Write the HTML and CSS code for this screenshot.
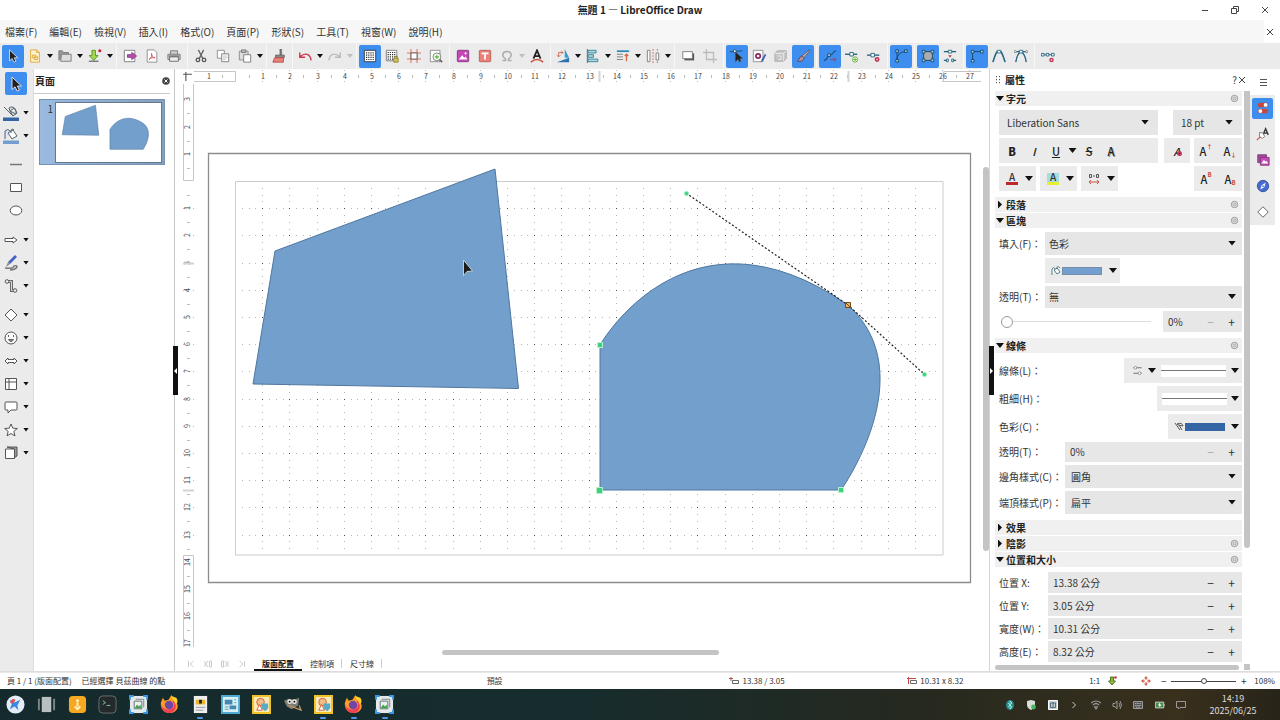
FILE: index.html
```html
<!DOCTYPE html>
<html lang="zh-Hant">
<head>
<meta charset="utf-8">
<title>無題 1 — LibreOffice Draw</title>
<link rel="stylesheet" href="styles.css">
</head>
<body>
<svg class="sprite" aria-hidden="true">
  <symbol id="cursor" viewBox="0 0 16 16"><path d="M4 1v12.500l3-2.700L9.200 15l2.200-1-2-4h4z" fill="#222" stroke="#fff" stroke-width=".8"/></symbol>
  <symbol id="new" viewBox="0 0 16 16"><path d="M3 1h7l3 3v11H3z" fill="#fdf1cf" stroke="#dca52e"/><path d="M10 1v3h3" fill="none" stroke="#dca52e"/><path d="M5 7h4v3H5zM7 9h4v3H7z" fill="none" stroke="#dca52e"/></symbol>
  <symbol id="open" viewBox="0 0 16 16"><path d="M1 13V2h4l1 2h6v3" fill="#999" stroke="#777"/><path d="M4 6h11v8H3z" fill="#ddd" stroke="#777"/></symbol>
  <symbol id="save" viewBox="0 0 16 16"><path d="M1 14h11" stroke="#777" stroke-width="1.6"/><path d="M4.500 1.500h4v6h3l-5 5.500-5-5.500h3z" fill="#a4d84e" stroke="#4d8f24"/><circle cx="13.500" cy="2" r="1.800" fill="#c0263a"/></symbol>
  <symbol id="export" viewBox="0 0 16 16"><path d="M1.500 1.500h12v13h-12z" fill="#fff" stroke="#777"/><path d="M5 6.500h5V4l5.500 4L10 12V9.500H5z" fill="#c04bb0" stroke="#7c397c"/></symbol>
  <symbol id="pdf" viewBox="0 0 16 16"><path d="M2.500 1h8l3 3v11h-11z" fill="#fff" stroke="#888"/><path d="M4.500 12c3-2 4-5 3-7-1 1 2 5.500 4 5-2-.5-5 0-7 2z" fill="none" stroke="#cf4a5c"/></symbol>
  <symbol id="print" viewBox="0 0 16 16"><path d="M4 6V2h8v4M1 6h14v6H1z" fill="#ccc" stroke="#777"/><path d="M3 9h10v5H3z" fill="#eee" stroke="#666"/><path d="M2 8h12" stroke="#555"/></symbol>
  <symbol id="cut" viewBox="0 0 16 16"><path d="M5 1l5 10M11 1L6 11" stroke="#666" stroke-width="1.500"/><circle cx="4.500" cy="12.500" r="2" fill="none" stroke="#555" stroke-width="1.500"/><circle cx="11.500" cy="12.500" r="2" fill="none" stroke="#555" stroke-width="1.500"/></symbol>
  <symbol id="copy" viewBox="0 0 16 16"><path d="M1.500 1.500h8v9h-8z" fill="#fff" stroke="#888"/><path d="M6.500 5.500h8v9h-8z" fill="#fff" stroke="#777"/><path d="M8 8h5M8 10h5M8 12h3" stroke="#bbb"/></symbol>
  <symbol id="paste" viewBox="0 0 16 16"><path d="M1.500 2.500h10v10h-10z" fill="#ddd" stroke="#888"/><path d="M4 1h5v3H4z" fill="#bbb" stroke="#777"/><path d="M6.500 6.500h8v8.500h-8z" fill="#fff" stroke="#777"/></symbol>
  <symbol id="brush" viewBox="0 0 16 16"><path d="M9 0h2v7H9z" fill="#777" stroke="#555" stroke-width=".5"/><path d="M4 7h10v3H4z" fill="#888" stroke="#666"/><path d="M3 10h10v5H1z" fill="#e7827b" stroke="#b24a47"/></symbol>
  <symbol id="undo" viewBox="0 0 16 16"><path d="M15 13C14 5 8 4 2.500 8.500M2 4v5.500h6" fill="none" stroke="#cf3450" stroke-width="1.600"/></symbol>
  <symbol id="redo" viewBox="0 0 16 16"><path d="M1 13C2 5 8 4 13.500 8.500M14 4v5.500H8" fill="none" stroke="#bbb" stroke-width="1.600"/></symbol>
  <symbol id="grid" viewBox="0 0 16 16"><path d="M1.500 1.500h13v13h-13z" fill="#fff" stroke="#333"/><path d="M3.500 4.500h10M3.500 7h10M3.500 9.500h10M3.500 12h10" stroke="#222" stroke-width="1.300" stroke-dasharray="1.300 1.200"/></symbol>
  <symbol id="gridsnap" viewBox="0 0 16 16"><path d="M1.500 1.500h12v12h-12z" fill="#fff" stroke="#777"/><path d="M3 4h9M3 6.500h9M3 9h9M3 11.500h7" stroke="#222" stroke-width="1.300" stroke-dasharray="1.300 1.200"/><path d="M10 10.500h5v4.500h-5zM11 10V8.500h3V10" fill="#d8c65a" stroke="#8a7d28"/></symbol>
  <symbol id="guides" viewBox="0 0 16 16"><path d="M4.500 0v16M11.500 0v16M0 4.500h16M0 11.500h16" stroke="#d9765f" stroke-width="1.200"/><path d="M4.500 4.500h7v7h-7z" fill="#fff" stroke="#555"/></symbol>
  <symbol id="zoom" viewBox="0 0 16 16"><path d="M1.500 1.500h11v13h-11z" fill="#fff" stroke="#888"/><circle cx="9" cy="9" r="4.500" fill="#f5fff0" stroke="#777"/><path d="M12 12l3 3" stroke="#666" stroke-width="2"/><path d="M6.500 9h5M9 6.500v5" stroke="#5caf3d" stroke-width="1.200"/></symbol>
  <symbol id="image" viewBox="0 0 16 16"><rect x="1.500" y="1.500" width="13" height="13" rx="1" fill="#c448b4" stroke="#7f397e"/><path d="M3 12l4-5 2.500 3L11 8.500l2 3.500z" fill="#fff"/><circle cx="11" cy="5" r="1.200" fill="#fff"/></symbol>
  <symbol id="textbox" viewBox="0 0 16 16"><rect x="1.500" y="1.500" width="13" height="13" rx="1" fill="#ea8077" stroke="#b65e57"/><path d="M4 5h8M8 5v7" stroke="#fff" stroke-width="2"/></symbol>
  <symbol id="omega" viewBox="0 0 16 16"><path d="M2 14h4v-2C0 8 2 2 8 2s8 6 2 10v2h4" fill="none" stroke="#aaa" stroke-width="2"/></symbol>
  <symbol id="fontwork" viewBox="0 0 16 16"><path d="M4 11L8 1.500 12 11M5.500 8h5" fill="none" stroke="#222" stroke-width="2"/><path d="M1 15q7-6 14 0" fill="none" stroke="#cc513d" stroke-width="1.800"/></symbol>
  <symbol id="rotate" viewBox="0 0 16 16"><path d="M10 0l5 10h-5z" fill="#3a9ccd"/><path d="M1 15l14-5v5z" fill="#2d72ad"/><path d="M3 9V4h5M6 2l2 2-2 2M1 7l2 2 2-2" fill="none" stroke="#d1674c"/></symbol>
  <symbol id="align" viewBox="0 0 16 16"><path d="M1.500 0v16" stroke="#555"/><path d="M2.500 1.500h9v3h-9zM2.500 6.500h6v3h-6zM2.500 11.500h11v3h-11z" fill="#addae2" stroke="#317c91"/></symbol>
  <symbol id="arrange" viewBox="0 0 16 16"><path d="M1 2.500h14" stroke="#2f86bd" stroke-width="2"/><path d="M1 6h7M1 9h7M1 12h7" stroke="#777"/><path d="M12 14V6M10 8l2-2 2 2" fill="none" stroke="#d76746" stroke-width="1.500"/></symbol>
  <symbol id="distribute" viewBox="0 0 16 16"><path d="M1.500 1.500h3v13h-3zM11.500 4.500h3v8h-3z" fill="#fff" stroke="#777"/><path d="M8 0v16M13 0v3M13 14v2" stroke="#d15d51" stroke-dasharray="2 1.500"/></symbol>
  <symbol id="shadow" viewBox="0 0 16 16"><path d="M4 5h11v8H4z" fill="#555"/><path d="M2 3h11v8H2z" fill="#fff" stroke="#777"/></symbol>
  <symbol id="crop" viewBox="0 0 16 16"><path d="M4 0v12h12M0 4h12v12" fill="none" stroke="#bbb" stroke-width="1.500"/></symbol>
  <symbol id="points" viewBox="0 0 16 16"><path d="M0 3h5l9-1" fill="none" stroke="#17496d"/><path d="M4 1h3v3H4z" fill="#fff" stroke="#25557a"/><path d="M6 3v12l3-3 2 3 1.500-1-1-3H15z" fill="#222" stroke="#777" stroke-width=".5"/></symbol>
  <symbol id="glue" viewBox="0 0 16 16"><path d="M1.500 1.500h11v13h-11z" fill="#fff" stroke="#888"/><circle cx="7" cy="8" r="2.500" fill="#fff" stroke="#8c2761" stroke-width="2"/><path d="M15 5l-4 7-1 3 3-2 3-6z" fill="#3763b8"/></symbol>
  <symbol id="extrude" viewBox="0 0 16 16"><path d="M1 5l3-3h10v9l-3 3H1z" fill="#c4c4c4" stroke="#aaa"/><path d="M1 5h10v9M11 5l3-3M4 8h4v4H5" fill="none" stroke="#eee"/></symbol>
  <symbol id="paint" viewBox="0 0 16 16"><path d="M15 1L7 8l2 2 6-7z" fill="#c5b9be" stroke="#654f5c"/><path d="M7 8c-3 0-3 4-5 6 4 1 7-1 7-4z" fill="#b9928f" stroke="#59455f"/></symbol>
  <symbol id="curve" viewBox="0 0 16 16"><path d="M1 13C6 13 4 7 8 7s3-5 7-5" fill="none" stroke="#174f7a" stroke-width="1.200"/><path d="M5.500 5.500h3v3h-3z" fill="#b8e0f1" stroke="#14456d"/><path d="M8 12h7M12 10l3 2-3 2" fill="none" stroke="#8a4a7b"/></symbol>
  <symbol id="pointadd" viewBox="0 0 16 16"><path d="M0 6h14" stroke="#21607b" stroke-width="1.500"/><path d="M5.500 4h4v4h-4z" fill="#fff" stroke="#21607b"/><circle cx="11.500" cy="12" r="3" fill="#fff" stroke="#58ae31"/><path d="M9.500 12h4M11.500 10v4" stroke="#58ae31"/></symbol>
  <symbol id="pointdel" viewBox="0 0 16 16"><path d="M0 7h14" stroke="#21607b" stroke-width="1.500"/><path d="M4.500 5h4v4h-4z" fill="#fff" stroke="#21607b"/><circle cx="11.500" cy="12" r="2.800" fill="#c73659"/><circle cx="11.500" cy="12" r=".9" fill="#fff"/></symbol>
  <symbol id="tocurve" viewBox="0 0 16 16"><path d="M3.500 14V3M3 13Q4 3 14 3" fill="none" stroke="#123f61"/><path d="M2 1h3v3H2zM2 12h3v3H2zM12 1h3v3h-3z" fill="#b0c6d4" stroke="#12486e"/></symbol>
  <symbol id="bezclose" viewBox="0 0 16 16"><path d="M3 3h10v10H3z" fill="#aaa" stroke="#174465"/><path d="M1.500 1.500h3v3h-3zM11.500 1.500h3v3h-3zM1.500 11.500h3v3h-3zM11.500 11.500h3v3h-3z" fill="#c3dbe6" stroke="#174465"/></symbol>
  <symbol id="split" viewBox="0 0 16 16"><path d="M1 3h14M1 13h5M10 13h5" stroke="#21607b" stroke-width="1.500"/><path d="M6 1.500h4v3H6zM4 11.500h2v3H4zM10 11.500h2v3h-2z" fill="#fff" stroke="#21607b"/><path d="M6 7h4L8 10z" fill="#c33b43"/></symbol>
  <symbol id="corner" viewBox="0 0 16 16"><path d="M3 14V3h11" fill="none" stroke="#123f61"/><path d="M1.500 1.500h3v3h-3zM12 1.500h3v3h-3zM1.500 12h3v3h-3z" fill="#b0dbea" stroke="#124766"/></symbol>
  <symbol id="smooth" viewBox="0 0 16 16"><path d="M1 15C3 9 4 5 6 3h4c2 2 3 6 5 12" fill="none" stroke="#276783" stroke-width="1.800"/><path d="M6 1.500h4v3H6z" fill="#fff" stroke="#276783"/></symbol>
  <symbol id="symmetric" viewBox="0 0 16 16"><path d="M1 3h14M2 15C3 9 4 5 8 3c4 2 5 6 6 12" fill="none" stroke="#276783" stroke-width="1.600"/><path d="M6 1.500h4v3H6z" fill="#fff" stroke="#276783"/><circle cx="1.500" cy="3" r="1.200" fill="#fff" stroke="#777"/><circle cx="14.500" cy="3" r="1.200" fill="#fff" stroke="#777"/></symbol>
  <symbol id="reduce" viewBox="0 0 16 16"><path d="M1 6.500h14" stroke="#21607b"/><path d="M.500 5h3v3h-3zM6 5h3v3H6zM12 5h3v3h-3z" fill="#fff" stroke="#21607b"/><circle cx="12" cy="12.500" r="2.600" fill="#c73659"/><circle cx="12" cy="12.500" r=".9" fill="#fff"/></symbol>
  <symbol id="linecolor" viewBox="0 0 16 16"><path d="M1 2l9 9M6 3c4-3 8 1 7 6L7 6zM7 6l3 5 4-3-3-5z" fill="#ddd" stroke="#52656c"/><path d="M0 12.500h16v3.500H0z" fill="#3465a4"/></symbol>
  <symbol id="fillcolor" viewBox="0 0 16 16"><path d="M2 11V3q3-3 5 0" fill="#ddf" stroke="#52656c"/><path d="M5 5l5-3 4 6-5 3z" fill="#fff" stroke="#52656c"/><path d="M8 5V2q2-2 3 0" fill="none" stroke="#52656c"/><path d="M0 12.500h16v3.500H0z" fill="#729fcf"/></symbol>
  <symbol id="line" viewBox="0 0 16 16"><path d="M2 7.500h12" stroke="#777" stroke-width="1.500"/></symbol>
  <symbol id="rect" viewBox="0 0 16 16"><path d="M2.500 3.500h11v8h-11z" fill="#fff" stroke="#555"/></symbol>
  <symbol id="ellipse" viewBox="0 0 16 16"><ellipse cx="8" cy="7.500" rx="5.800" ry="4.500" fill="#fff" stroke="#555"/></symbol>
  <symbol id="arrow" viewBox="0 0 16 16"><path d="M2 6.500h8V5l4 3-4 3V9.500H2z" fill="#fff" stroke="#555"/></symbol>
  <symbol id="pen" viewBox="0 0 16 16"><path d="M12 0l2 2-7 7-2-2z" fill="#4762c4"/><path d="M5 7l-2 5 4-3z" fill="#888"/><path d="M2 13q9 1 9-2 3-1 3 1-2 3-7 3" fill="none" stroke="#777" stroke-width="1.400"/></symbol>
  <symbol id="connector" viewBox="0 0 16 16"><path d="M4.500 3.500h4v9h3" fill="none" stroke="#666" stroke-width="3"/><path d="M4.500 3.500h4v9h3" fill="none" stroke="#ddd"/><circle cx="4" cy="3.500" r="1.800" fill="#eee" stroke="#555"/><circle cx="12" cy="12.500" r="1.800" fill="#eee" stroke="#555"/></symbol>
  <symbol id="diamond" viewBox="0 0 16 16"><path d="M8 2l6 6-6 6-6-6z" fill="#fff" stroke="#555"/></symbol>
  <symbol id="smile" viewBox="0 0 16 16"><circle cx="8" cy="8" r="6" fill="#f8f8f8" stroke="#555"/><path d="M5.500 5v2M10.500 5v2M5.500 9.500h5q-1 2-2.500 2t-2.500-2" fill="#888" stroke="#666"/></symbol>
  <symbol id="dblarrow" viewBox="0 0 16 16"><path d="M2 8l3-3v1.500h6V5l3 3-3 3V9.500H5V11z" fill="#fff" stroke="#555"/></symbol>
  <symbol id="table" viewBox="0 0 16 16"><path d="M2.500 2.500h11v11h-11zM2.500 6h11M6 2.500v11" fill="#fff" stroke="#555"/></symbol>
  <symbol id="callout" viewBox="0 0 16 16"><path d="M3 3h10q1 0 1 1v6q0 1-1 1H8l-3 3v-3H3q-1 0-1-1V4q0-1 1-1z" fill="#fff" stroke="#555"/></symbol>
  <symbol id="star" viewBox="0 0 16 16"><path d="M8 2l1.800 4.200 4.500.3-3.500 2.900 1.200 4.500L8 11.500l-4 2.400 1.200-4.500-3.500-2.900 4.500-.3z" fill="#fff" stroke="#555"/></symbol>
  <symbol id="cube" viewBox="0 0 16 16"><path d="M4 2h10v9l-3 2V4z" fill="#999" stroke="#555"/><path d="M2.500 4h9v9.500h-9z" fill="#fff" stroke="#555"/></symbol>
  <symbol id="gear" viewBox="0 0 10 10"><circle cx="5" cy="5" r="3.600" fill="#ddd" stroke="#999"/><circle cx="5" cy="5" r="1.500" fill="none" stroke="#aaa"/></symbol>
  <symbol id="sliders" viewBox="0 0 16 16"><path d="M2 4h12M2 12h12" stroke="#777" stroke-width="1.500"/><circle cx="5" cy="4" r="2" fill="#fff" stroke="#777"/><circle cx="11" cy="12" r="2" fill="#fff" stroke="#777"/></symbol>
  <symbol id="document" viewBox="0 0 20 20"><path d="M1 1h18v18H1z" fill="#e3e8ea"/><path d="M1 5V1h4M15 1h4v4M19 15v4h-4M5 19H1v-4" fill="none" stroke="#3697e5" stroke-width="2"/><path d="M5.500 6.500h8v8h-8z" fill="#eef2ee" stroke="#667177"/><path d="M6 14l2.500-4 2 2 1.500-2 1 4z" fill="#45a350"/><path d="M7 4.500h8.500V13" fill="none" stroke="#7d868b"/></symbol>
  <symbol id="firefox" viewBox="0 0 20 20"><path d="M10 19C4 19 0 14 1 8l2-5 2 3 4-1 3-5 2 4 3 3c4 6 0 12-7 12z" fill="#ff9b26"/><path d="M1 9c1 5 5 7 9 6 5-1 6-5 3-9 5 1 6 13-4 13C4 19 1 14 1 9z" fill="#ef4057"/><circle cx="9.500" cy="10.500" r="4.500" fill="#7147a6"/><path d="M12 1c0 4 5 5 4 9 3-1 3-5 1-7z" fill="#ffd52b"/></symbol>
  <symbol id="draw" viewBox="0 0 20 20"><path d="M1 1h18v18H1z" fill="#f9eab8" stroke="#f2c229" stroke-width="2"/><circle cx="9" cy="7.500" r="4" fill="#f4bd88" stroke="#d16339"/><path d="M5 16l3-6 3 6z" fill="#fff" stroke="#d16339"/><path d="M10 9h7v5l-3 3-4-3z" fill="#57abc7"/></symbol>
</svg>

<header class="titlebar">
  <h1>無題 1 — LibreOffice Draw</h1>
  <div class="window-buttons">
    <button aria-label="最小化"><svg viewBox="0 0 10 10"><path d="M2 5.500h6"/></svg></button>
    <button aria-label="還原"><svg viewBox="0 0 10 10"><path d="M1.500 3.500h5v5h-5zM3.500 3.500v-2h5v5h-2"/></svg></button>
    <button aria-label="關閉"><svg viewBox="0 0 10 10"><path d="M2 2l6 6M8 2L2 8"/></svg></button>
  </div>
</header>
<nav class="menubar">
  <button>檔案(F)</button><button>編輯(E)</button><button>檢視(V)</button><button>插入(I)</button><button>格式(O)</button><button>頁面(P)</button><button>形狀(S)</button><button>工具(T)</button><button>視窗(W)</button><button>說明(H)</button>
  <button class="close-doc" aria-label="關閉文件"><svg viewBox="0 0 10 10"><path d="M2 2l6 6M8 2L2 8"/></svg></button>
</nav>
<div class="toolbar" role="toolbar" aria-label="標準">
  <button class="tool on" aria-label="選取"><svg><use href="#cursor"/></svg></button>
  <button class="tool" aria-label="新增"><svg><use href="#new"/></svg></button><button class="drop" aria-label="新增選項"></button>
  <button class="tool" aria-label="開啟"><svg><use href="#open"/></svg></button><button class="drop" aria-label="開啟選項"></button>
  <button class="tool" aria-label="儲存"><svg><use href="#save"/></svg></button><button class="drop" aria-label="儲存選項"></button>
  <i class="sep"></i>
  <button class="tool" aria-label="匯出"><svg><use href="#export"/></svg></button>
  <button class="tool" aria-label="PDF"><svg><use href="#pdf"/></svg></button>
  <button class="tool" aria-label="列印"><svg><use href="#print"/></svg></button>
  <i class="sep"></i>
  <button class="tool" aria-label="剪下"><svg><use href="#cut"/></svg></button>
  <button class="tool" aria-label="複製"><svg><use href="#copy"/></svg></button>
  <button class="tool" aria-label="貼上"><svg><use href="#paste"/></svg></button><button class="drop" aria-label="貼上選項"></button>
  <i class="sep tight"></i>
  <button class="tool" aria-label="仿製格式"><svg><use href="#brush"/></svg></button>
  <i class="sep tight"></i>
  <button class="tool" aria-label="復原"><svg><use href="#undo"/></svg></button><button class="drop" aria-label="復原選項"></button>
  <button class="tool" aria-label="取消復原"><svg><use href="#redo"/></svg></button><button class="drop off" aria-label="取消復原選項"></button>
  <i class="sep"></i>
  <button class="tool on" aria-label="網格"><svg><use href="#grid"/></svg></button>
  <button class="tool" aria-label="貼齊網格"><svg><use href="#gridsnap"/></svg></button>
  <button class="tool" aria-label="輔助線"><svg><use href="#guides"/></svg></button>
  <button class="tool" aria-label="縮放"><svg><use href="#zoom"/></svg></button>
  <i class="sep"></i>
  <button class="tool" aria-label="圖片"><svg><use href="#image"/></svg></button>
  <button class="tool" aria-label="文字方塊"><svg><use href="#textbox"/></svg></button>
  <button class="tool" aria-label="特殊字元"><svg class="small"><use href="#omega"/></svg></button><button class="drop off" aria-label="特殊字元選項"></button>
  <button class="tool" aria-label="文字藝術"><svg><use href="#fontwork"/></svg></button>
  <i class="sep tight"></i>
  <button class="tool" aria-label="轉換"><svg><use href="#rotate"/></svg></button><button class="drop" aria-label="轉換選項"></button>
  <button class="tool" aria-label="對齊"><svg><use href="#align"/></svg></button><button class="drop" aria-label="對齊選項"></button>
  <button class="tool" aria-label="排列"><svg><use href="#arrange"/></svg></button><button class="drop" aria-label="排列選項"></button>
  <button class="tool" aria-label="分布"><svg><use href="#distribute"/></svg></button><button class="drop" aria-label="分布選項"></button>
  <i class="sep"></i>
  <button class="tool" aria-label="陰影"><svg><use href="#shadow"/></svg></button>
  <button class="tool" aria-label="裁剪"><svg><use href="#crop"/></svg></button>
  <i class="sep"></i>
  <button class="tool on" aria-label="接點"><svg><use href="#points"/></svg></button>
  <button class="tool" aria-label="黏著點"><svg><use href="#glue"/></svg></button>
  <button class="tool" aria-label="立體"><svg><use href="#extrude"/></svg></button>
  <button class="tool on" aria-label="繪圖"><svg><use href="#paint"/></svg></button>
  <i class="sep"></i>
  <button class="tool on" aria-label="移動接點"><svg><use href="#curve"/></svg></button>
  <button class="tool" aria-label="插入接點"><svg><use href="#pointadd"/></svg></button>
  <button class="tool" aria-label="刪除接點"><svg><use href="#pointdel"/></svg></button>
  <i class="sep"></i>
  <button class="tool on" aria-label="轉為曲線"><svg><use href="#tocurve"/></svg></button>
  <i class="sep"></i>
  <button class="tool on" aria-label="閉合曲線"><svg><use href="#bezclose"/></svg></button>
  <button class="tool" aria-label="分割曲線"><svg><use href="#split"/></svg></button>
  <i class="sep"></i>
  <button class="tool on" aria-label="角點"><svg><use href="#corner"/></svg></button>
  <button class="tool" aria-label="平滑"><svg><use href="#smooth"/></svg></button>
  <button class="tool" aria-label="對稱"><svg><use href="#symmetric"/></svg></button>
  <i class="sep"></i>
  <button class="tool" aria-label="減少接點"><svg><use href="#reduce"/></svg></button>
</div>

<main class="workspace">
  <div class="toolbox" role="toolbar" aria-label="繪圖">
    <div class="tool-group single"><button class="tool on" aria-label="選取"><svg><use href="#cursor"/></svg></button></div>
    <div class="tool-group">
      <div><button class="tool" aria-label="線條色彩"><svg><use href="#linecolor"/></svg></button><button class="drop" aria-label="線條色彩選項"></button></div>
      <div><button class="tool" aria-label="填入色彩"><svg><use href="#fillcolor"/></svg></button><button class="drop" aria-label="填入色彩選項"></button></div>
    </div>
    <div class="tool-group single">
      <button class="tool" aria-label="直線"><svg><use href="#line"/></svg></button>
      <button class="tool" aria-label="矩形"><svg><use href="#rect"/></svg></button>
      <button class="tool" aria-label="橢圓"><svg><use href="#ellipse"/></svg></button>
    </div>
    <div class="tool-group">
      <div><button class="tool" aria-label="線條與箭頭"><svg><use href="#arrow"/></svg></button><button class="drop" aria-label="箭頭選項"></button></div>
      <div><button class="tool" aria-label="曲線"><svg><use href="#pen"/></svg></button><button class="drop" aria-label="曲線選項"></button></div>
      <div><button class="tool" aria-label="連接線"><svg><use href="#connector"/></svg></button><button class="drop" aria-label="連接線選項"></button></div>
    </div>
    <div class="tool-group">
      <div><button class="tool" aria-label="基本形狀"><svg><use href="#diamond"/></svg></button><button class="drop" aria-label="基本形狀選項"></button></div>
      <div><button class="tool" aria-label="符號形狀"><svg><use href="#smile"/></svg></button><button class="drop" aria-label="符號選項"></button></div>
      <div><button class="tool" aria-label="箭號"><svg><use href="#dblarrow"/></svg></button><button class="drop" aria-label="箭號選項"></button></div>
      <div><button class="tool" aria-label="流程圖"><svg><use href="#table"/></svg></button><button class="drop" aria-label="流程圖選項"></button></div>
      <div><button class="tool" aria-label="圖說"><svg><use href="#callout"/></svg></button><button class="drop" aria-label="圖說選項"></button></div>
      <div><button class="tool" aria-label="星形"><svg><use href="#star"/></svg></button><button class="drop" aria-label="星形選項"></button></div>
      <div><button class="tool" aria-label="立體物件"><svg><use href="#cube"/></svg></button><button class="drop" aria-label="立體物件選項"></button></div>
    </div>
  </div>

  <aside class="pages">
    <div class="pages-head"><h2>頁面</h2><button aria-label="關閉"><svg viewBox="0 0 8 8"><circle cx="4" cy="4" r="3.800" fill="#444"/><path d="M2.500 2.500l3 3M5.500 2.500l-3 3" stroke="#fff"/></svg></button></div>
    <div class="pages-list">
      <button class="thumb"><span>1</span>
        <svg viewBox="0 0 763 429" aria-hidden="true"><path d="M0 0h763v429H0z" fill="#fff"/><path class="blue" d="M67 98L287 16 311 235 45 231z"/><path class="blue" d="M392 192C392 192 478 40 640 152C716 221 633 337 633 337H392Z"/></svg>
      </button>
    </div>
    <button class="grip grip-left" aria-label="收合頁面窗格"><svg viewBox="0 0 5 8"><path d="M4 1v6L1 4z" fill="#fff"/></svg></button>
  </aside>

  <section class="editor">
    <div class="ruler-corner"><svg viewBox="0 0 10 10"><path d="M1 3h8M3.500 1v8" stroke="#555"/></svg></div>
    <svg class="ruler ruler-h" id="ruler-h"></svg>
    <svg class="ruler ruler-v" id="ruler-v"></svg>
    <svg class="drawing">
      <g transform="translate(41 97)">
        <path d="M-26.500-27.500h762v429h-762z" fill="#fff" stroke="#8c8c8c" stroke-width="1.300"/>
        <path d="M.500.500h707.500v373.500H.500z" fill="none" stroke="#ccc"/>
        <path id="minor-dots" fill="#b4b4b4" shape-rendering="crispEdges"/>
        <path id="major-dots" fill="#4c4c4c" shape-rendering="crispEdges"/>
        <path class="blue" d="M40 70L260-12 283.500 207.500 18 203z"/>
        <path class="blue" d="M365 164C365 164 451 12 613 124C689 193 606 309 606 309H365Z"/>
        <path d="M451 12L613 124 689 193" fill="none" stroke="#222" stroke-width="1.200" stroke-dasharray="2 2"/>
        <g fill="#3fd07e" stroke="#b4f2cd"><path d="M362.500 161.500h5v5h-5zM603.500 306.500h5v5h-5z"/><path d="M361.500 306.500h6v6h-6z"/><circle cx="451.500" cy="12.500" r="2.200"/><circle cx="689.500" cy="193.500" r="2.200"/></g>
        <path d="M610.500 121.500h5v5h-5z" fill="#f5b35e" stroke="#6d4a20"/><path d="M611 122l4 4" stroke="#6d4a20"/>
        <path d="M228.500 79v15.500l3.500-4 5.500-.500z" fill="#1b1b1b" stroke="#dce8f4" stroke-width=".8"/>
      </g>
    </svg>
    <div class="vscroll"><i></i></div>
    <div class="hscroll"><i></i></div>
    <div class="sheet-tabs">
      <div class="sheet-nav">
        <button aria-label="第一頁"><svg viewBox="0 0 8 8"><path d="M1.500 1v6M6.500 1L3 4l3.500 3"/></svg></button>
        <button aria-label="上一頁"><svg viewBox="0 0 8 8"><path d="M1 1v6M4 1L2 4l2 3M5.500 1v6h2V1z"/></svg></button>
        <button aria-label="下一頁"><svg viewBox="0 0 8 8"><path d="M7 1v6M4 1l2 3-2 3M.5 1v6h2V1z"/></svg></button>
        <button aria-label="最後一頁"><svg viewBox="0 0 8 8"><path d="M6.500 1v6M1.500 1L5 4 1.500 7"/></svg></button>
      </div>
      <button class="sheet active">版面配置</button><button class="sheet">控制項</button><button class="sheet">尺寸線</button>
    </div>
  </section>

  <aside class="properties">
    <button class="grip grip-right" aria-label="收合側邊欄"><svg viewBox="0 0 5 8"><path d="M1 1v6l3-3z" fill="#fff"/></svg></button>
    <div class="prop-main">
      <div class="prop-title"><svg viewBox="0 0 6 10"><path d="M1.500 1v9M4.500 1v9" stroke="#555" stroke-dasharray="1.200 1.800"/></svg><h2>屬性</h2><button aria-label="說明">?</button><button aria-label="關閉"><svg viewBox="0 0 10 10"><path d="M2 2l6 6M8 2L2 8"/></svg></button></div>
      <div class="prop-body">
        <div class="sections">
          <h3><i class="caret"></i>字元<button aria-label="字元選項"><svg><use href="#gear"/></svg></button></h3>
          <div class="fields char">
            <div class="row"><span class="select wide"><select aria-label="字型"><option>Liberation Sans</option></select></span><span class="select size end"><select aria-label="字型大小"><option>18 pt</option></select></span></div>
            <div class="row">
              <div class="box wide styles"><button><b>B</b></button><button><em>I</em></button><button><u>U</u></button><button class="drop" aria-label="底線選項"></button><button><s>S</s></button><button class="shaded">A</button></div>
              <div class="box clear"><button class="mark" aria-label="清除格式">A<i class="dot"></i></button></div>
              <div class="box pair end"><button>A<sup>↑</sup></button><button>A<sub>↓</sub></button></div>
            </div>
            <div class="row">
              <div class="box swatch"><button class="font-red">A</button><button class="drop" aria-label="字型色彩選項"></button></div>
              <div class="box swatch"><button class="highlight">A</button><button class="drop" aria-label="醒目提示選項"></button></div>
              <div class="box swatch"><button class="spacing" aria-label="字距"><svg viewBox="0 0 12 12"><path d="M1.500 1.500h2v3h-2zM8.500 1.500h2v3h-2zM5 3h2" fill="none" stroke="#555"/><path d="M1 9h10M3 7L1 9l2 2M9 7l2 2-2 2" fill="none" stroke="#c9553e"/></svg></button><button class="drop" aria-label="字距選項"></button></div>
              <div class="box pair end"><button>A<sup>B</sup></button><button>A<sub>B</sub></button></div>
            </div>
          </div>
          <h3><i class="caret shut"></i>段落<button aria-label="段落選項"><svg><use href="#gear"/></svg></button></h3>
          <h3><i class="caret"></i>區塊<button aria-label="區塊選項"><svg><use href="#gear"/></svg></button></h3>
          <div class="fields area">
            <div class="row"><label for="fill">填入(F)：</label><span class="select"><select id="fill"><option>色彩</option></select></span></div>
            <div class="row"><span class="label-space"></span><div class="box color fill"><button aria-label="填入色彩"><svg class="bucket" viewBox="0 0 10 10"><path d="M1 9V3q2-3 3 0M3 4l3-2 3 4-3 2zM6 3V1q2-1 3 1" fill="#fff" stroke="#527c80"/></svg><i></i></button><button class="drop" aria-label="色彩選項"></button></div></div>
            <div class="row"><label for="trans">透明(T)：</label><span class="select"><select id="trans"><option>無</option></select></span></div>
            <div class="row"><input class="trans-slider" type="range" min="0" max="100" value="0" aria-label="透明度"><span class="spin percent end"><input aria-label="透明度百分比" value="0%"><button disabled aria-label="減少">−</button><button aria-label="增加">+</button></span></div>
          </div>
          <h3><i class="caret"></i>線條<button aria-label="線條選項"><svg><use href="#gear"/></svg></button></h3>
          <div class="fields stroke">
            <div class="row"><span class="label">線條(L)：</span><div class="box end style"><button aria-label="箭頭樣式"><svg class="mini"><use href="#sliders"/></svg></button><button class="drop" aria-label="箭頭選項"></button><button class="line-preview" aria-label="線條樣式"></button><button class="drop" aria-label="樣式選項"></button></div></div>
            <div class="row"><span class="label">粗細(H)：</span><div class="box end weight"><button class="line-preview" aria-label="線條粗細"></button><button class="drop" aria-label="粗細選項"></button></div></div>
            <div class="row"><span class="label">色彩(C)：</span><div class="box end color line"><button aria-label="線條色彩"><svg class="bucket" viewBox="0 0 10 10"><path d="M1 1l5 7M3 2q5-2 6 2L5 3zM5 3l3 5" fill="#fff" stroke="#555"/></svg><i></i></button><button class="drop" aria-label="色彩選項"></button></div></div>
            <div class="row"><label for="lt">透明(T)：</label><span class="spin"><input id="lt" value="0%"><button disabled aria-label="減少">−</button><button aria-label="增加">+</button></span></div>
            <div class="row"><label for="corner-style">邊角樣式(C)：</label><span class="select"><select id="corner-style"><option>圓角</option></select></span></div>
            <div class="row"><label for="cap-style">端頂樣式(P)：</label><span class="select"><select id="cap-style"><option>扁平</option></select></span></div>
          </div>
          <h3><i class="caret shut"></i>效果</h3>
          <h3><i class="caret shut"></i>陰影<button aria-label="陰影選項"><svg><use href="#gear"/></svg></button></h3>
          <h3><i class="caret"></i>位置和大小<button aria-label="位置選項"><svg><use href="#gear"/></svg></button></h3>
          <div class="fields position">
            <div class="row"><label for="px">位置 X:</label><span class="spin"><input id="px" value="13.38 公分"><button aria-label="減少">−</button><button aria-label="增加">+</button></span></div>
            <div class="row"><label for="py">位置 Y:</label><span class="spin"><input id="py" value="3.05 公分"><button aria-label="減少">−</button><button aria-label="增加">+</button></span></div>
            <div class="row"><label for="pw">寬度(W)：</label><span class="spin"><input id="pw" value="10.31 公分"><button aria-label="減少">−</button><button aria-label="增加">+</button></span></div>
            <div class="row"><label for="ph">高度(E)：</label><span class="spin"><input id="ph" value="8.32 公分"><button aria-label="減少">−</button><button aria-label="增加">+</button></span></div>
          </div>
          <div class="prop-hscroll"></div>
        </div>
        <div class="prop-vscroll"><i></i><b></b></div>
      </div>
    </div>
    <div class="deck">
      <button class="menu" aria-label="側邊欄設定"><svg viewBox="0 0 10 10"><path d="M2 2.500h7M2 5.500h7M2 8.500h7" stroke="#555"/></svg></button>
      <div class="deck-tabs">
        <button class="on" aria-label="屬性"><svg viewBox="0 0 16 16"><rect x="2" y="2" width="12" height="5" rx="2.500" fill="#c64838"/><circle cx="11" cy="4.500" r="2.200" fill="#fff"/><rect x="2" y="9" width="12" height="5" rx="2.500" fill="#c64838"/><circle cx="5" cy="11.500" r="2.200" fill="#fff"/></svg></button>
        <button aria-label="樣式"><svg viewBox="0 0 16 16"><path d="M8 9l3-7 3 7M9 7h4" fill="none" stroke="#333" stroke-width="1.500"/><path d="M4 6l4 1 2 4-3 2-3-2z" fill="#fff" stroke="#777"/><path d="M5 11l-4 4" stroke="#d35353" stroke-width="1.500"/></svg></button>
        <button aria-label="圖庫"><svg viewBox="0 0 16 16"><path d="M2 2h10v9H2z" fill="#a5469b" stroke="#7f397e"/><path d="M5 5h10v9H5z" fill="#c74bb8" stroke="#7f397e"/><path d="M6 12l3-4 2 2 1-1 2 3z" fill="#fff"/></svg></button>
        <button aria-label="導覽"><svg viewBox="0 0 16 16"><circle cx="8" cy="8" r="6.500" fill="#466bd2" stroke="#345099"/><path d="M11 4L9.500 9 5 12l1.500-5z" fill="#fff"/><circle cx="8" cy="8" r="1" fill="#466bd2"/></svg></button>
        <button aria-label="形狀"><svg><use href="#diamond"/></svg></button>
      </div>
    </div>
  </aside>
</main>

<footer class="statusbar">
  <span class="selection"><span>頁 1 / 1 (版面配置)</span><span>已經選擇 貝茲曲線 的點</span></span>
  <span>預設</span>
  <span class="coord"><svg viewBox="0 0 10 8"><path d="M0 1.500h4M2 0v4" stroke="#b55"/><path d="M3.500 3.500h6v3h-6z" fill="#fff" stroke="#666"/></svg>13.38 / 3.05</span>
  <span class="coord"><svg viewBox="0 0 10 8"><path d="M0 1.500h9M1.500 0v7" stroke="#c44"/><path d="M3.500 3.500h6v3h-6z" fill="#fff" stroke="#666"/></svg>10.31 x 8.32</span>
  <span class="zoom-tools">
    <span>1:1</span>
    <svg viewBox="0 0 10 10"><path d="M3.500 1h3v4h2L5 9 1.500 5h2z" fill="#8fbd3b" stroke="#55722b"/><circle cx="8.500" cy="1.500" r="1.300" fill="#c33"/></svg>
    <svg class="move" viewBox="0 0 10 10"><path d="M5 2v6M2 5h6" stroke="#cf5a3f" stroke-dasharray="2 2"/><path d="M3 2.500L5 0l2 2.500zM3 7.500L5 10l2-2.500zM2.500 3L0 5l2.500 2zM7.500 3L10 5 7.500 7z" fill="#cf5a3f"/></svg>
    <button aria-label="縮小">−</button><input type="range" min="0" max="100" value="50" aria-label="縮放比例"><button aria-label="放大">+</button>
    <output>108%</output>
  </span>
</footer>

<div class="taskbar">
  <div class="apps">
    <button aria-label="開始"><svg viewBox="0 0 20 20"><circle cx="10" cy="10" r="9.500" fill="#e4ecf7"/><path d="M4 5l5 3 6-3-3 6 1 5-4-4-5 3 2-5z" fill="#3889e4"/><path d="M4 8l3-4 3 1-2 4z" fill="#e25350"/></svg></button>
    <button aria-label="工作檢視"><svg viewBox="0 0 20 20"><path d="M5 2h10v16H5z" fill="#b7bfc0"/><path d="M1 4h2v12H1zM17 4h2v12h-2z" fill="#79878a"/></svg></button>
    <button aria-label="應用程式"><svg viewBox="0 0 20 20"><rect x="1" y="1" width="18" height="18" rx="4" fill="#f7a823"/><circle cx="10" cy="6" r="1.500" fill="#fff4c6"/><path d="M10 8v4M7 12l3 3 3-3" stroke="#fff4c6" stroke-width="2" fill="none"/></svg></button>
    <button aria-label="終端機"><svg viewBox="0 0 20 20"><rect x="1" y="1" width="18" height="18" rx="4" fill="#242a2b" stroke="#6c7272"/><path d="M5 6l3 2-3 2M9 11h4" fill="none" stroke="#83c69c"/></svg></button>
    <button aria-label="擷圖"><svg><use href="#document"/></svg></button>
    <button aria-label="Firefox"><svg><use href="#firefox"/></svg></button>
    <button class="running" aria-label="文件"><svg viewBox="0 0 20 20"><path d="M3 1h14v18H3z" fill="#eee"/><path d="M5 5h10v5H5z" fill="#e8b62e"/><path d="M8.500 5h3v4h-3z" fill="#222"/><path d="M5 13h10M5 16h8" stroke="#999"/></svg></button>
    <button aria-label="Impress"><svg viewBox="0 0 20 20"><path d="M1 1h18v18H1z" fill="#d8eff6" stroke="#4ea9d0" stroke-width="2"/><path d="M4 5h8v5H4zM9 11h7v4H9z" fill="#4687ad"/><path d="M4 12.500h4M4 15h4M14 5h2M14 8h2" stroke="#599cbb"/></svg></button>
    <button aria-label="Draw"><svg><use href="#draw"/></svg></button>
    <button aria-label="GIMP"><svg viewBox="0 0 20 20"><path d="M1 6l5-2 6 1 5-2-1 8-7 4-5-3z" fill="#7e7b70"/><circle cx="7" cy="7" r="2.500" fill="#eee"/><circle cx="12" cy="7" r="2.500" fill="#eee"/><circle cx="7" cy="7" r="1"/><circle cx="12" cy="7" r="1"/><path d="M6 11l13 5-2-5" fill="none" stroke="#bb9266" stroke-width="1.500"/></svg></button>
    <button class="running" aria-label="Draw 視窗"><svg><use href="#draw"/></svg></button>
    <button class="running" aria-label="Firefox 視窗"><svg><use href="#firefox"/></svg></button>
    <button class="running" aria-label="擷圖視窗"><svg><use href="#document"/></svg></button>
  </div>
  <div class="tray">
    <svg viewBox="0 0 10 10"><ellipse cx="5" cy="5" rx="4" ry="5" fill="#278d91"/><path d="M3 3l4 4-2 2V1l2 2-4 4" fill="none" stroke="#aff5dd" stroke-width=".8"/></svg>
    <svg viewBox="0 0 10 10"><path d="M1 1l4-1 4 1v4q0 3-4 5-4-2-4-5z" fill="#d7ddd4"/><circle cx="7.500" cy="7" r="2.400" fill="#47b961"/></svg>
    <svg viewBox="0 0 10 10"><path d="M.5.500h9v9h-9z" fill="#c6d0d5" stroke="#fff"/><path d="M2.500 3h5v4.500h-5zM5 2v6" fill="none" stroke="#536c7b"/></svg>
    <svg viewBox="0 0 10 10"><path d="M3.500 2l3 3-3 3" fill="none" stroke="#ccc"/></svg>
    <svg viewBox="0 0 10 10"><path d="M0 3q5-4 10 0M2 5q3-3 6 0M3.500 7q1.500-1 3 0L5 9z" fill="none" stroke="#999" stroke-width="1.200"/></svg>
    <svg viewBox="0 0 10 10"><path d="M1 3.500h2L5 1v8L3 6.500H1zM7 3q2 2 0 4M8 1q3 4 0 8" fill="none" stroke="#999"/></svg>
    <svg viewBox="0 0 10 10"><path d="M.5 1.500h9v7h-9z" fill="#555" stroke="#999"/><path d="M2 3.500h6M2 5.500h6M3 7.200h4" stroke="#aaa" stroke-dasharray="1.500 .7"/></svg>
    <svg viewBox="0 0 12 10"><path d="M.5 1.500h10v7H.5zM11 4v2" fill="#4b8b4e" stroke="#ddd"/><path d="M6 2L3.500 5.500h2L5 8l3-3.500H6z" fill="#fff"/></svg>
    <svg viewBox="0 0 10 10"><path d="M.5 1.500h9v6H4L2.500 9V7.500h-2z" fill="none" stroke="#999"/></svg>
  </div>
  <div class="clock"><time>14:19</time><time>2025/06/25</time></div>
</div>
<script src="rulers.js"></script>
</body>
</html>
```
FILE: rulers.js
```js
// One centimetre at the current zoom level, in pixels.
const CM = 27.2;
const NS = 'http://www.w3.org/2000/svg';

function add(parent, name, attrs, text) {
  const el = document.createElementNS(NS, name);
  for (const key in attrs) el.setAttribute(key, attrs[key]);
  if (text !== undefined) el.textContent = text;
  parent.appendChild(el);
}

// Horizontal ruler
const h = document.getElementById('ruler-h');
add(h, 'path', { d: 'M0 2.500H41.500V12.500H0M749.500 2.500H787M749.500 12.500H787M749.500 2.500V12.500', fill: 'none', stroke: '#c6c6c6' });
for (let n = -1; n <= 27; n++) {
  const x = Math.round(41 + n * CM);
  if (n !== 0) {
    add(h, 'text', { x: x + 1, y: 10 }, Math.abs(n));
    if (n > 0) add(h, 'path', { d: `M${x + 0.5} 1v1M${x + 0.5} 12v1`, stroke: '#bbb' });
  }
  if (n < 27) add(h, 'path', { d: `M${x + 14}.5 6v3`, stroke: '#bbb' });
}
add(h, 'path', { d: 'M405.500 2v11M654.500 2v11', stroke: '#d4d4d4', 'stroke-width': 2 });

// Vertical ruler
const v = document.getElementById('ruler-v');
add(v, 'path', { d: 'M8.500 0V96.500H18.500V0', fill: 'none', stroke: '#c6c6c6' });
for (let n = -3; n <= 17; n++) {
  const y = Math.round(97 + n * CM);
  if (n !== 0) add(v, 'text', { x: 0, y: 0, transform: `translate(15 ${y}) rotate(-90)` }, Math.abs(n));
  if (n > 0 && n < 15) add(v, 'path', { d: `M8 ${y}.5h1M18 ${y}.5h1`, stroke: '#bbb' });
  add(v, 'path', { d: `M12 ${y + 14}.5h3`, stroke: '#bbb' });
}
add(v, 'path', { d: 'M8 179.500h11M8 406.500h11', stroke: '#d4d4d4', 'stroke-width': 2 });
add(v, 'path', { d: 'M8.500 564V471.500H18.500V564', fill: 'none', stroke: '#c6c6c6' });

// Grid dots inside the page margins
let minor = '';
let major = '';
const step = CM / 4;
for (let i = 0; i <= 103; i++) {
  for (let j = 1; j <= 54; j++) {
    const onColumn = i % 4 === 0;
    const onRow = j % 4 === 0;
    if ((!onColumn && !onRow) || i === 0) continue;
    const dot = `M${Math.round(i * step)} ${Math.round(j * step)}h1v1h-1z`;
    if (onColumn && onRow) major += dot;
    else minor += dot;
  }
}
document.getElementById('minor-dots').setAttribute('d', minor);
document.getElementById('major-dots').setAttribute('d', major);
```
FILE: styles.css
```css
* { box-sizing: border-box; }
body { margin: 0; height: 100vh; display: flex; flex-direction: column; overflow: hidden; background: #fff; color: #333; font: 10px/14px "Noto Sans CJK TC", "Noto Sans", sans-serif; }
button, input, select { font: inherit; color: inherit; border: 0; padding: 0; margin: 0; background: none; min-width: 0; border-radius: 0; }
h1, h2, h3 { margin: 0; font-size: 10px; line-height: 14px; font-weight: 700; color: #222; }
button { display: flex; align-items: center; justify-content: center; flex: none; }
svg { display: block; flex: none; }
.sprite { position: absolute; width: 0; height: 0; }
.blue { fill: #729fcb; stroke: #50779f; stroke-width: 1; }

.titlebar { display: grid; grid-template-columns: 1fr auto 1fr; align-items: center; height: 20px; flex: none; }
.titlebar h1 { grid-column: 2; font-size: 10px; }
.window-buttons { display: flex; justify-content: flex-end; padding-right: 10px; gap: 20px; }
.window-buttons svg, .close-doc svg, .prop-title button svg { width: 10px; height: 10px; fill: none; stroke: #444; }
.menubar { display: flex; align-items: stretch; height: 23px; flex: none; background: #f7f7f7; padding-left: 5px; gap: 12px; }
.menubar .close-doc { margin-left: auto; width: 16px; padding-right: 5px; background: #fff; }

.toolbar { display: flex; align-items: center; height: 26px; flex: none; background: #ebebeb; padding-left: 2px; }
.tool { width: 22px; height: 23px; border-radius: 2px; }
.tool svg { width: 14px; height: 14px; }
.tool svg.small { width: 12px; height: 12px; }
.tool.on, .deck .on { background: #3d8eef; }
.drop { width: 8px; height: 20px; }
.drop::after { content: ""; width: 6px; height: 4px; background: #111; clip-path: polygon(0 0, 100% 0, 50% 100%); }
.drop.off::after { background: #c0c0c0; }
.sep { width: 5px; height: 24px; flex: none; background: linear-gradient(#f8f8f8, #f8f8f8) center / 1px 100% no-repeat; }
.sep.tight { width: 4px; }

.workspace { display: flex; flex: 1; min-height: 0; border-bottom: 1px solid #ddd; }
.toolbox { width: 33px; flex: none; background: #ebebeb; display: flex; flex-direction: column; gap: 6px; padding-top: 3px; }
.tool-group > div { display: flex; }
.tool-group:not(.single) .drop { height: 23px; }
.single { padding-left: 5px; }
.toolbox .tool svg { width: 16px; height: 16px; }

.pages { position: relative; width: 142px; flex: none; border-left: 1px solid #ddd; border-right: 1px solid #c8c8c8; display: flex; flex-direction: column; }
.pages-head { display: flex; justify-content: space-between; align-items: center; height: 25px; margin-right: 4px; padding-left: 1px; border-bottom: 1px solid #ccc; }
.pages-head button svg { width: 8px; height: 8px; }
.pages-list { padding: 5px; flex: 1; }
.thumb { width: 126px; height: 66px; justify-content: space-between; align-items: flex-start; border: 1px solid #7793b1; background: linear-gradient(90deg, #9abae0, #86a1bd); padding: 2px; }
.thumb span { width: 15px; line-height: 14px; text-align: right; padding-right: 2px; }
.thumb svg { width: 107px; height: 61px; border: 1px solid #66758a; background: #fff; }
.thumb .blue { stroke-width: 4; }
.grip { position: absolute; top: 277px; width: 5px; height: 49px; background: #111; z-index: 2; }
.grip svg { width: 5px; height: 8px; }
.grip-left { right: -4px; }
.grip-right { left: -1px; }

.editor { flex: 1; min-width: 0; display: grid; grid-template: 15px minmax(0, 1fr) 9px 15px / 19px minmax(0, 1fr) 8px; }
.ruler-corner { padding: 2px 0 0 7px; }
.ruler-corner svg { width: 11px; height: 11px; }
.ruler { width: 100%; height: 100%; overflow: hidden; }
.ruler text { font-size: 7px; text-anchor: middle; fill: #444; }
.ruler-h { grid-column: 2; }
.ruler-v { grid-row: 2; grid-column: 1; }
.drawing { grid-row: 2; grid-column: 2; width: 100%; height: 100%; overflow: hidden; }
.vscroll { grid-row: 1 / 3; grid-column: 3; padding: 98px 0 0 2px; }
.vscroll i { display: block; height: 384px; border-radius: 3px; background: #c4c4c4; }
.hscroll { grid-row: 3; grid-column: 1 / 4; display: flex; align-items: flex-end; padding: 0 0 1px 267px; }
.hscroll i { width: 277px; height: 5px; border-radius: 3px; background: #c4c4c4; }
.sheet-tabs { grid-row: 4; grid-column: 1 / 4; display: flex; font-size: 8px; }
.sheet-nav { display: flex; gap: 9px; padding-left: 12px; margin-right: 8px; }
.sheet-nav svg { width: 8px; height: 8px; fill: none; stroke: #ccc; }
.sheet { padding: 0 8px; }
.sheet.active { font-weight: 700; box-shadow: inset 0 -2px #111; color: #111; }
.sheet:not(.active) { background: linear-gradient(#ccc, #ccc) right center / 1px 9px no-repeat; }

.properties { position: relative; width: 291px; flex: none; display: flex; border-left: 1px solid #d5d5d5; }
.prop-main { flex: 1; display: flex; flex-direction: column; padding-left: 5px; min-width: 0; }
.prop-title { height: 22px; flex: none; display: flex; align-items: center; padding-right: 3px; }
.prop-title > svg { width: 6px; height: 10px; margin-right: 4px; }
.prop-title h2 { margin-right: auto; }
.prop-body { display: flex; gap: 2px; flex: 1; min-height: 0; }
.sections { flex: 1; display: flex; flex-direction: column; min-width: 0; }
.sections h3 { display: flex; align-items: center; height: 15px; flex: none; background: #f0f0f0; padding-right: 3px; margin-bottom: 1px; }
.sections h3:has(+ .fields) { margin-bottom: 0; }
.sections h3 button { margin-left: auto; }
.sections h3 svg { width: 9px; height: 9px; }
.caret { width: 8px; height: 5px; margin: 0 2px 0 1px; background: #111; clip-path: polygon(0 0, 100% 0, 50% 100%); }
.caret.shut { width: 4px; height: 8px; margin: 0 4px 0 3px; clip-path: polygon(0 0, 100% 50%, 0 100%); }
.fields { display: flex; flex-direction: column; gap: 3px; padding-left: 4px; flex: none; }
.row { display: flex; align-items: stretch; min-height: 20px; }
.row label, .row .label, .label-space { display: flex; align-items: center; flex: none; white-space: nowrap; }
.end { margin-left: auto; }
.char { padding-top: 4px; padding-bottom: 6px; }
.char .row { height: 25px; gap: 4px; }
.area { padding-top: 4px; padding-bottom: 6px; }
.area .row { height: 23px; }
.area .row:nth-child(2) { height: 25px; }
.area .row:nth-child(n + 3) { height: 22px; }
.area label, .area .label-space { width: 46px; }
.area .row:last-child { height: 21px; }
.stroke { padding-top: 5px; padding-bottom: 6px; }
.stroke .row:nth-child(-n + 3) { height: 25px; }
.stroke .row:nth-child(n + 5) { height: 23px; }
.stroke label { width: 66px; }
.position { padding-top: 5px; padding-bottom: 3px; gap: 2px; }
.position .row { height: 21px; }
.position label { width: 49px; }
.box { display: flex; align-items: center; background: #ebebeb; }
.wide { width: 159px; flex: none; }
.select { position: relative; display: flex; flex: 1; background: #e6e6e6; }
.select.wide, .select.size { flex: none; }
.select.size { width: 69px; }
.select select { appearance: none; width: 100%; padding: 0 20px 0 4px; outline: 0; }
.char .select select { padding-left: 8px; }
.stroke .select select { padding-left: 6px; }
.select::after { content: ""; position: absolute; right: 6px; top: calc(50% - 3px); width: 8px; height: 5px; background: #111; clip-path: polygon(0 0, 100% 0, 50% 100%); }
.char .select::after { right: 9px; }
.box .drop::after { width: 8px; height: 5px; }
.styles { padding-left: 2px; color: #222; font-size: 11px; font-weight: 500; }
.styles b { font-weight: 900; }
.styles button { width: 22px; }
.styles .drop { width: 11px; }
.shaded { text-shadow: 1px 1px #888; }
.clear { width: 26px; justify-content: center; margin-left: 2px; }
.mark { position: relative; font-style: italic; font-weight: 500; font-size: 11px; color: #222; }
.dot { position: absolute; right: -2px; bottom: 2px; width: 5px; height: 5px; border-radius: 50%; border: 2px solid #c73659; }
.pair { width: 48px; flex: none; justify-content: space-around; color: #222; font-size: 11px; font-weight: 500; }
.pair sup, .pair sub { font-size: 6px; line-height: 6px; color: #cc4a35; font-weight: 700; }
.pair sup { align-self: flex-start; }
.pair sub { align-self: flex-end; }
.swatch { width: 37px; flex: none; justify-content: space-between; padding: 0 3px 0 7px; font-weight: 500; }
.swatch > button:first-child { width: 12px; height: 12px; }
.font-red { border-bottom: 3px solid #c0272d; }
.highlight { border-bottom: 3px solid #e8ef2c; background: #a5dce0; }
.spacing svg { width: 12px; height: 12px; }
.color { justify-content: space-between; padding: 0 3px 0 6px; }
.color.fill { width: 75px; }
.color.line { width: 74px; }
.bucket { width: 10px; height: 10px; margin-right: 1px; }
.color i { width: 40px; height: 8px; background: #729fcf; border: 1px solid #768ea8; }
.color.line i { background: #3465a4; border-color: #3465a4; }
.spin { display: flex; flex: 1; background: #e7e7e7; align-items: center; }
.spin input { flex: 1; width: 20px; padding-left: 5px; outline: 0; }
.spin button { width: 21px; height: 20px; font-size: 12px; }
.spin button:disabled { color: #aaa; }
.spin.percent { flex: none; width: 79px; }
input[type=range] { appearance: none; height: 14px; background: linear-gradient(#ddd, #ddd) center / 100% 1px no-repeat; }
.trans-slider { width: 150px; margin-left: 2px; align-self: center; }
input[type=range]::-webkit-slider-thumb { appearance: none; width: 12px; height: 12px; background: #fff; border: 1px solid #999; border-radius: 50%; }
.style { width: 118px; padding-left: 8px; gap: 4px; padding-right: 3px; justify-content: space-between; }
.mini { width: 11px; height: 11px; }
.weight { width: 85px; padding: 0 3px 0 5px; justify-content: space-between; }
.line-preview { width: 65px; height: 12px; background: linear-gradient(#777, #777) center / 100% 1px no-repeat #fff; }
.prop-hscroll { width: 244px; height: 5px; border-radius: 3px; background: #c4c4c4; flex: none; }
.prop-vscroll { width: 6px; display: flex; flex-direction: column; justify-content: space-between; padding-bottom: 1px; }
.prop-vscroll i { height: 457px; border-radius: 0 0 3px 3px; background: #c4c4c4; }
.prop-vscroll b { height: 6px; background: #c4c4c4; }
.deck { width: 30px; flex: none; padding: 5px 5px 0 0; }
.deck .menu { width: 25px; height: 15px; }
.deck .menu svg { width: 10px; height: 10px; }
.deck-tabs { width: 25px; margin-top: 6px; background: #ebebeb; display: grid; grid-auto-rows: 26px; place-items: center; }
.deck-tabs button { width: 21px; height: 21px; border-radius: 2px; }
.deck-tabs svg { width: 14px; height: 14px; }

.statusbar { height: 17px; flex: none; display: grid; grid-template-columns: 480fr 243fr 178fr 182fr auto; align-items: center; padding: 0 5px 0 7px; font-size: 8px; white-space: nowrap; border-top: 1px solid #e8e8e8; }
.selection { display: flex; gap: 10px; }
.coord { display: flex; align-items: center; gap: 3px; }
.coord svg { width: 10px; height: 8px; }
.zoom-tools { display: flex; align-items: center; }
.zoom-tools svg { width: 10px; height: 10px; margin-left: 7px; }
.zoom-tools .move { margin: 0 8px 0 24px; }
.zoom-tools button { width: 9px; font-size: 10px; }
.zoom-tools input { width: 65px; margin: 0 3px; background-image: linear-gradient(#444, #444); }
.zoom-tools input::-webkit-slider-thumb { width: 6px; height: 6px; border-color: #444; }
.zoom-tools output { margin-left: 6px; }

.taskbar { height: 31px; flex: none; display: flex; align-items: stretch; background: linear-gradient(90deg, #152a2c 0%, #162c2d 45%, #26291f 72%, #39301d 92%, #282419 100%); color: #ddd; }
.apps { display: flex; justify-content: space-between; width: 388px; margin-left: 6px; }
.apps button { width: 19px; position: relative; }
.apps svg { width: 19px; height: 19px; }
.running::after { content: ""; position: absolute; bottom: 1px; width: 6px; height: 2px; border-radius: 1px; background: #4a96e8; }
.tray { display: flex; justify-content: space-between; align-items: center; width: 181px; margin-left: auto; }
.tray svg { width: 10px; height: 10px; }
.clock { display: flex; flex-direction: column; justify-content: center; width: 94px; text-align: center; font-size: 9px; line-height: 12px; }
```
